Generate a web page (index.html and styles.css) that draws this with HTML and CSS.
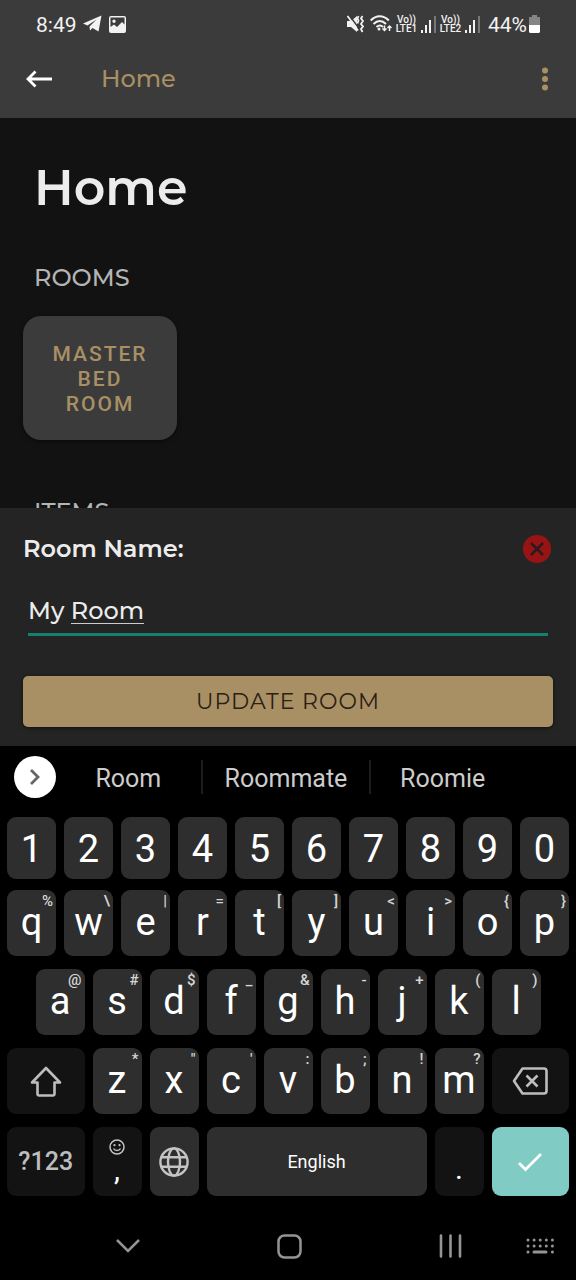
FILE: index.html
```
<!DOCTYPE html>
<html lang="en">
<head>
<meta charset="utf-8">
<meta name="viewport" content="width=device-width, initial-scale=1">
<title>Home</title>
<link rel="stylesheet" href="styles.css">
</head>
<body>
<header class="top">
  <div class="status">
    <span class="clock">8:49</span>
    <svg class="telegram" width="19" height="18" viewBox="0 0 19 18"><path fill="#f2f2f2" d="M0 8.500 18.500.5 15.500 16.500 9.500 13 7 15.500 6.500 11.500 13.500 4.500 4.500 10.500Z"/></svg>
    <svg class="picture" width="17" height="17" viewBox="0 0 17 17"><path fill="#f2f2f2" fill-rule="evenodd" d="M2 0h13a2 2 0 0 1 2 2v13a2 2 0 0 1-2 2H2a2 2 0 0 1-2-2V2a2 2 0 0 1 2-2ZM1.500 1.500V11L5 8.500 8 11l5-5 2.500 2.500V1.500ZM5 3.500a1.700 1.700 0 1 1 0 3.400 1.700 1.700 0 0 1 0-3.400Z"/></svg>
    <div class="status-right">
      <svg width="17" height="18" viewBox="0 0 17 18"><path fill="#f2f2f2" d="M0 6h4l6-5v16l-6-5H0Z"/><path d="M2 0 12.500 14" stroke="#3b3b3b" stroke-width="1.500"/><path d="M.5 1 11 15.500" stroke="#f2f2f2" stroke-width="1.800"/><path d="m11.500 1-1 2.500 1 2-1 3M15.500 1 14 3.500l2 2.500-2 3 2 2.500-2 2.500 1.500 3" fill="none" stroke="#f2f2f2" stroke-width="1.800"/></svg>
      <svg class="wifi" width="22" height="18" viewBox="0 0 22 18"><g fill="none" stroke="#f2f2f2" stroke-width="2"><path d="M.7 5.500C6-.2 13.500-.2 18.800 5.500M3.500 9C7.500 5 12 5 16 9M6.500 12c2.300-2 4.500-2 6.500 0"/><path stroke-width="1.500" d="M14.500 10.500v5m-2-2 2 2 2-2M19.500 16v-5m-2 2 2-2 2 2"/></g><circle cx="9" cy="14" r="1.500" fill="#f2f2f2"/></svg>
      <span class="lte"><span>Vo))</span><span>LTE1</span></span>
      <svg class="signal" width="15" height="17" viewBox="0 0 15 17"><path stroke="#f2f2f2" stroke-width="2" d="M1 17v-3M5 17V9M9 17V4"/><path stroke="#777" stroke-width="2" d="M14 17V0"/></svg>
      <span class="lte"><span>Vo))</span><span>LTE2</span></span>
      <svg class="signal" width="15" height="17" viewBox="0 0 15 17"><path stroke="#f2f2f2" stroke-width="2" d="M1 17v-3M5 17V9M9 17V4"/><path stroke="#777" stroke-width="2" d="M14 17V0"/></svg>
      <span class="percent">44%</span>
      <svg width="11" height="18" viewBox="0 0 11 18"><path fill="#858585" d="M3 0h5v2h3v9H0V2h3Z"/><path fill="#fff" d="M0 10h11v7l-1 1H1l-1-1Z"/></svg>
    </div>
  </div>
  <div class="appbar">
    <button class="plain" aria-label="Back"><svg width="26" height="18" viewBox="0 0 26 18"><path d="M26 9H2M9.500 1.500 2 9l7.500 7.500" fill="none" stroke="#fff" stroke-width="2.800"/></svg></button>
    <span class="appbar-title">Home</span>
    <button class="plain" aria-label="More options"><svg width="6" height="24" viewBox="0 0 6 24" fill="#a89064"><circle cx="3" cy="3.500" r="3"/><circle cx="3" cy="12" r="3"/><circle cx="3" cy="20.500" r="3"/></svg></button>
  </div>
</header>

<main class="content">
  <h1>Home</h1>
  <h2>ROOMS</h2>
  <button class="room">MASTER BED ROOM</button>
  <h2>ITEMS</h2>
</main>

<section class="sheet">
  <div class="sheet-head">
    <label for="room-name">Room Name:</label>
    <button class="plain" aria-label="Close"><svg width="28" height="28" viewBox="0 0 28 28"><circle cx="14" cy="14" r="14" fill="#981414"/><path d="m8 8 12 12M20 8 8 20" stroke="#2b1a20" stroke-width="2.500"/></svg></button>
  </div>
  <div class="field">
    <input id="room-name" type="text" value="My Room" autocomplete="off" spellcheck="false">
    <span class="composing"></span>
  </div>
  <button class="update">UPDATE ROOM</button>
</section>

<section class="keyboard" aria-label="Keyboard">
  <div class="suggestions">
    <button class="expand" aria-label="Expand"><svg width="12" height="18" viewBox="0 0 12 18"><path d="m2 2 7 7-7 7" fill="none" stroke="#666" stroke-width="2.800"/></svg></button>
    <button class="word">Room</button>
    <button class="word">Roommate</button>
    <button class="word">Roomie</button>
  </div>
  <div class="row digits">
    <button class="key">1</button><button class="key">2</button><button class="key">3</button><button class="key">4</button><button class="key">5</button><button class="key">6</button><button class="key">7</button><button class="key">8</button><button class="key">9</button><button class="key">0</button>
  </div>
  <div class="row">
    <button class="key">q<span class="hint">%</span></button>
    <button class="key">w<span class="hint">\</span></button>
    <button class="key">e<span class="hint">|</span></button>
    <button class="key">r<span class="hint">=</span></button>
    <button class="key">t<span class="hint">[</span></button>
    <button class="key">y<span class="hint">]</span></button>
    <button class="key">u<span class="hint">&lt;</span></button>
    <button class="key">i<span class="hint">&gt;</span></button>
    <button class="key">o<span class="hint">{</span></button>
    <button class="key">p<span class="hint">}</span></button>
  </div>
  <div class="row home-row">
    <button class="key">a<span class="hint">@</span></button>
    <button class="key">s<span class="hint">#</span></button>
    <button class="key">d<span class="hint">$</span></button>
    <button class="key">f<span class="hint">_</span></button>
    <button class="key">g<span class="hint">&amp;</span></button>
    <button class="key">h<span class="hint">-</span></button>
    <button class="key">j<span class="hint">+</span></button>
    <button class="key">k<span class="hint">(</span></button>
    <button class="key">l<span class="hint">)</span></button>
  </div>
  <div class="row">
    <button class="key wide dark" aria-label="Shift"><svg width="32" height="31" viewBox="0 0 32 31"><path d="M16 2 30 16.500h-5.500V28a1.500 1.500 0 0 1-1.500 1.500H9A1.500 1.500 0 0 1 7.500 28V16.500H2Z" fill="none" stroke="#bdbdbd" stroke-width="2.600" stroke-linejoin="round"/></svg></button>
    <button class="key">z<span class="hint">*</span></button>
    <button class="key">x<span class="hint">"</span></button>
    <button class="key">c<span class="hint">'</span></button>
    <button class="key">v<span class="hint">:</span></button>
    <button class="key">b<span class="hint">;</span></button>
    <button class="key">n<span class="hint">!</span></button>
    <button class="key">m<span class="hint">?</span></button>
    <button class="key wide dark" aria-label="Delete"><svg width="36" height="28" viewBox="0 0 36 28" fill="none" stroke="#bdbdbd" stroke-width="2.600" stroke-linejoin="round"><path d="M10.500 1.500H32a2.500 2.500 0 0 1 2.500 2.500v20a2.500 2.500 0 0 1-2.500 2.500H10.500L2 14Z"/><path d="m14.500 8.500 11 11m0-11-11 11"/></svg></button>
  </div>
  <div class="row bottom">
    <button class="key wide dark symbols">?123</button>
    <button class="key dark comma"><svg width="16" height="16" viewBox="0 0 16 16"><circle cx="8" cy="8" r="7" fill="none" stroke="#c4c4c4" stroke-width="1.500"/><g fill="#c4c4c4"><circle cx="5.500" cy="6.200" r="1.100"/><circle cx="10.500" cy="6.200" r="1.100"/></g><path d="M4.500 9.500c1.500 2.600 5.500 2.600 7 0" fill="none" stroke="#c4c4c4" stroke-width="1.500"/></svg><span>,</span></button>
    <button class="key" aria-label="Language"><svg width="30" height="30" viewBox="0 0 30 30" fill="none" stroke="#c4c4c4" stroke-width="2.400"><circle cx="15" cy="15" r="13.600"/><ellipse cx="15" cy="15" rx="6" ry="13.600"/><path d="M2.500 10.300h25M2.500 19.700h25"/></svg></button>
    <button class="key space">English</button>
    <button class="key dark period"><span>.</span></button>
    <button class="key wide enter" aria-label="Done"><svg width="26" height="20" viewBox="0 0 26 20"><path d="m2 11 6.500 6.500L24 2" fill="none" stroke="#fff" stroke-width="2.800"/></svg></button>
  </div>
  <nav class="navbar">
    <button class="plain" aria-label="Hide keyboard"><svg width="24" height="16" viewBox="0 0 24 16"><path d="m1 2 11 11L23 2" fill="none" stroke="#949494" stroke-width="2.500"/></svg></button>
    <button class="plain" aria-label="Home"><svg width="25" height="25" viewBox="0 0 25 25"><rect x="1.500" y="1.500" width="22" height="22" rx="6" fill="none" stroke="#949494" stroke-width="2.500"/></svg></button>
    <div class="nav-end">
      <button class="plain" aria-label="Recent apps"><svg width="23" height="24" viewBox="0 0 23 24"><path d="M2 1.500v21M11.500 1.500v21M21 1.500v21" stroke="#949494" stroke-width="2.600" stroke-linecap="round"/></svg></button>
      <button class="plain" aria-label="Switch keyboard"><svg width="28" height="16" viewBox="0 0 28 16" stroke="#949494" stroke-width="3" stroke-linecap="round"><path stroke-dasharray="0 6.100" d="M2 2h24.500M2 8h24.500"/><path d="M2 14h.01M8 14h12M26.400 14h.01"/></svg></button>
    </div>
  </nav>
</section>
</body>
</html>
```
FILE: styles.css
```
* { box-sizing: border-box; }

body {
  margin: 0;
  height: 100vh;
  display: flex;
  flex-direction: column;
  background: #121212;
  color: #ececec;
  font-family: Montserrat, Inter, "Open Sans", sans-serif;
}

button {
  margin: 0;
  padding: 0;
  border: 0;
  background: none;
  color: inherit;
  font: inherit;
}

svg { display: block; flex: none; }

.plain { display: flex; }

/* Status and app bars */
.top {
  flex: none;
  background: #3b3b3b;
  padding-bottom: 14px;
}

.status {
  display: flex;
  align-items: center;
  height: 48px;
  padding: 0 36px;
  font: 21px/24px Roboto, sans-serif;
  color: #f2f2f2;
}

.clock, .percent { padding-top: 2px; }

.telegram { margin-left: 6px; }
.picture { margin-left: 7px; }

.status-right {
  display: flex;
  align-items: center;
  margin-left: auto;
}

.wifi { margin-left: 6px; }

.lte {
  display: flex;
  flex-direction: column;
  align-items: center;
  width: 25px;
  margin-left: 2px;
  font-size: 10px;
  font-weight: 500;
  line-height: 9px;
}

.signal { margin-left: 2px; }
.percent { margin: 0 2px 0 8px; }

.appbar {
  display: flex;
  align-items: center;
  height: 56px;
  padding: 6px 28px 0 26px;
}

.appbar-title {
  flex: 1;
  margin-left: 49px;
  color: #a89064;
  font-size: 24px;
  font-weight: 500;
  line-height: 32px;
}

/* Page content */
.content {
  flex: 1 1 0;
  min-height: 0;
  overflow: hidden;
  padding: 40px 23px 0;
}

h1, h2 { margin: 0; padding-left: 11px; }

h1 {
  font-size: 49px;
  font-weight: 600;
  line-height: 60px;
}

h2 {
  margin: 44px 0 22px;
  color: #b4b4b4;
  font-size: 24px;
  font-weight: 500;
  line-height: 32px;
}

.room {
  display: block;
  width: 154px;
  padding: 26px 28px 23px;
  border-radius: 18px;
  background: #3b3b3b;
  box-shadow: 0 1px 4px #0008;
  color: #a89064;
  font: 500 21px/25px Roboto, sans-serif;
  letter-spacing: 2px;
}

.room + h2 { margin-top: 56px; }

/* Room name sheet */
.sheet {
  flex: none;
  padding: 25px 23px 19px;
  background: #242424;
}

.sheet-head {
  display: flex;
  align-items: center;
  justify-content: space-between;
  padding-right: 2px;
  font-size: 24px;
  font-weight: 600;
  line-height: 32px;
}

.field {
  position: relative;
  margin: 26px 5px 40px;
}

.field input {
  display: block;
  width: 100%;
  height: 45px;
  padding: 0 0 3px;
  border: 0;
  border-bottom: 3px solid #14806f;
  border-radius: 0;
  outline: 0;
  background: none;
  color: #ececec;
  font: 500 24px/32px Montserrat, Inter, sans-serif;
}

/* Marks the word being typed */
.composing {
  position: absolute;
  left: 43px;
  bottom: 12px;
  width: 73px;
  height: 1px;
  background: #ccc;
}

.update {
  display: block;
  width: 100%;
  height: 51px;
  border-radius: 5px;
  background: #a89064;
  box-shadow: 0 1px 4px #0008;
  color: #2a2014;
  font-size: 22px;
  letter-spacing: 1px;
}

/* Keyboard */
.keyboard {
  flex: none;
  background: #000;
  color: #fff;
  font-family: Roboto, sans-serif;
}

.suggestions {
  display: grid;
  grid-template-columns: 42px 6fr 7fr 6fr;
  align-items: center;
  height: 62px;
  margin-bottom: 9px;
  padding: 0 62px 0 14px;
}

.expand {
  display: flex;
  align-items: center;
  justify-content: center;
  width: 42px;
  height: 42px;
  border-radius: 50%;
  background: #fff;
}

.word {
  height: 34px;
  padding-top: 2px;
  color: #ccc;
  font-size: 25px;
}

.word + .word { border-left: 2px solid #1c1c1c; }

.row {
  display: grid;
  grid-template-columns: repeat(20, 1fr);
  height: 66px;
  margin-bottom: 13px;
  padding: 0 3px;
}

.key {
  position: relative;
  display: flex;
  align-items: center;
  justify-content: center;
  grid-column: span 2;
  margin: 0 4px;
  padding-bottom: 2px;
  border-radius: 9px;
  background: #2e2e2e;
  font-size: 38px;
  line-height: 44px;
}

.digits { height: 62px; margin-bottom: 11px; }
.digits .key { padding: 2px 0 0; }
.home-row .key:first-child { grid-column: 2 / span 2; }

.key.wide { grid-column: span 3; padding: 0; }
.key.dark { background: #131313; }
.key.enter { background: #80cbc4; }

.hint {
  position: absolute;
  top: 3px;
  right: 3px;
  color: #d6d6d6;
  font-size: 15px;
  font-weight: 500;
  line-height: 16px;
}

.bottom { height: 69px; margin-bottom: 0; }
.bottom .key { padding: 0; }

.key.symbols {
  color: #bdbdbd;
  font-size: 25px;
  font-weight: 500;
}

.bottom .key.comma {
  flex-direction: column;
  justify-content: space-between;
  padding: 12px 0 11px;
  font-size: 30px;
  line-height: 30px;
}

.key.space { grid-column: span 8; font-size: 18px; }

.bottom .key.period {
  align-items: flex-end;
  padding-bottom: 12px;
  font-size: 30px;
  line-height: 30px;
}

.navbar {
  display: flex;
  align-items: center;
  justify-content: space-between;
  height: 84px;
  padding: 16px 22px 0 116px;
}

.nav-end {
  display: flex;
  align-items: center;
  gap: 64px;
}
```
